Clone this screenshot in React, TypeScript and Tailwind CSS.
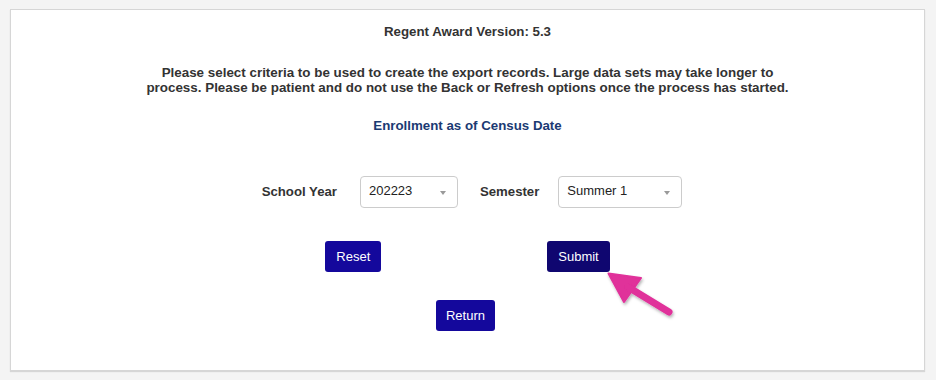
import { FC } from "react";

const Select: FC<{ value: string; width: string }> = ({ value, width }) => {
    return (
        <div className={`relative flex h-[32px] ${width} items-center rounded-[4px] border border-[#cccccc] bg-white pl-[8px] text-[13px] text-[#222]`}>
            <span className="-mt-[2px]">{value}</span>
            <span className="absolute right-[11px] top-[14px] h-0 w-0 border-x-[3.5px] border-t-[4px] border-x-transparent border-t-[#9a9a9a]"></span>
        </div>
    );
};

const App: FC = () => {
    return (
        <div className="min-h-[380px] w-full bg-[#f4f4f4] pt-[9px] font-['Liberation_Sans',Arial,sans-serif]">
            <div className="relative ml-[10px] flex h-[362px] w-[915px] flex-col items-center border border-[#d6d6d6] bg-white pt-[14px] shadow-[0_1px_1px_rgba(0,0,0,0.12)]">
                <h1 className="text-[13.3px] font-bold leading-[15px] text-[#333]">Regent Award Version: 5.3</h1>
                <p className="mt-[26px] max-w-[656px] text-center text-[13.4px] font-bold leading-[15px] text-[#333]">
                    Please select criteria to be used to create the export records. Large data sets may take longer to process. Please be patient and do not use the Back or Refresh options once the process has started.
                </p>
                <h2 className="mt-[23px] text-[13.3px] font-bold leading-[15px] text-[#1b3a73]">Enrollment as of Census Date</h2>

                <div className="mt-[43px] flex items-center pl-[9px]">
                    <label className="text-[13.2px] font-bold text-[#333]">School Year</label>
                    <div className="ml-[23px]">
                        <Select value="202223" width="w-[98px]" />
                    </div>
                    <label className="ml-[22px] text-[13.2px] font-bold text-[#333]">Semester</label>
                    <div className="ml-[19px]">
                        <Select value="Summer 1" width="w-[124px]" />
                    </div>
                </div>

                <div className="mt-[33px] flex items-center gap-[166px]">
                    <button className="h-[31px] rounded-[3px] bg-[#14089c] px-[11px] text-[13px] text-white">Reset</button>
                    <button className="h-[31px] rounded-[3px] bg-[#0f0670] px-[11px] text-[13px] text-white">Submit</button>
                </div>
                <div className="mt-[28px] flex pr-[4px]">
                    <button className="h-[31px] rounded-[3px] bg-[#14089c] px-[10px] text-[13px] text-white">Return</button>
                </div>

                {/* annotation arrow pointing at Submit */}
                <svg className="absolute left-[590px] top-[255px]" width="90" height="70" viewBox="0 0 90 70">
                    <defs>
                        <filter id="sh" x="-30%" y="-30%" width="160%" height="160%">
                            <feDropShadow dx="1" dy="2" stdDeviation="1.5" floodColor="#000" floodOpacity="0.3" />
                        </filter>
                    </defs>
                    <g filter="url(#sh)" fill="#e0309a" stroke="#e0309a" strokeLinejoin="round" strokeLinecap="round">
                        <polygon points="7.5,8.5 40,13 23,37" strokeWidth="2" />
                        <line x1="27" y1="22" x2="68" y2="47" strokeWidth="7" />
                    </g>
                </svg>
            </div>
        </div>
    );
};

export default App;
